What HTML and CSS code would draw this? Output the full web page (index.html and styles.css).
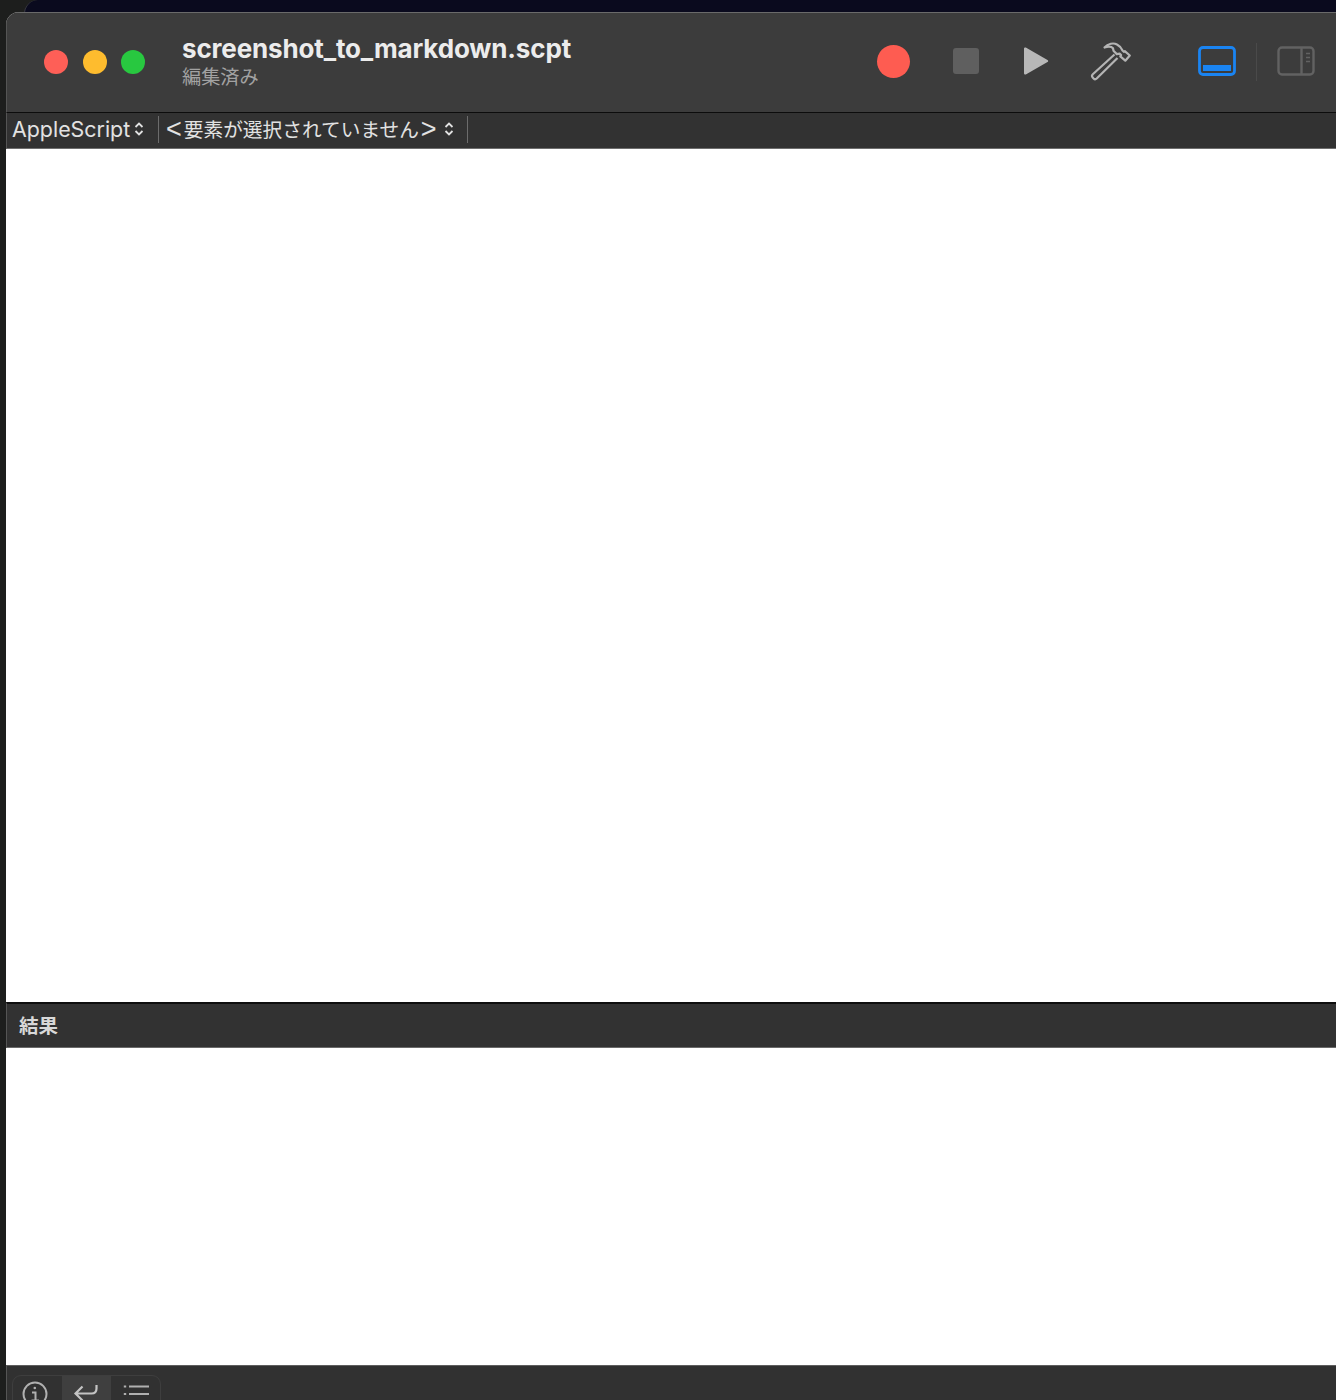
FILE: index.html
```html
<!DOCTYPE html>
<html lang="ja">
<head>
<meta charset="utf-8">
<title>screenshot_to_markdown.scpt</title>
<link rel="stylesheet" href="styles.css">
</head>
<body>
<div class="back-window"></div>
<main class="window">
  <header class="titlebar">
    <div class="traffic">
      <span class="light red"></span>
      <span class="light yellow"></span>
      <span class="light green"></span>
    </div>
    <div class="titles">
      <div class="doc-name">screenshot_to_markdown.scpt</div>
      <div class="doc-state">編集済み</div>
    </div>
    <div class="tools">
      <span class="record"></span>
      <span class="stop"></span>
      <svg class="play" width="26" height="30" viewBox="0 0 26 30"><path d="M1 2.700v24.600c0 1 1 1.500 1.800 1.100L24.500 16c.9-.5.900-1.600 0-2.100L2.800 1.600C2 1.200 1 1.700 1 2.700z" fill="#b8b8b8"/></svg>
      <svg class="hammer" width="42" height="40" viewBox="0 0 42 40" fill="none" stroke="#b4b4b4" stroke-width="2.200" stroke-linejoin="round"><path d="M24.500 13.500 2.800 33.300a2.200 2.200 0 0 0-.1 3.100l.9 1a2.200 2.200 0 0 0 3.100.1L27.500 17"/><path d="M14.500 6.500C18 2.500 23.500 1.500 27 3.500c2.500 1.300 4.500 3.500 5.500 6l1.300 1.300 1-.7 5 4.400-4.500 5.200-5-4.400.8-1.200-1.500-1.500-2.800.5-3.300-3.300-.5-2.500C21.500 5.500 18 5.300 14.500 6.500z"/></svg>
      <svg class="panel-bottom" width="38" height="30" viewBox="0 0 38 30"><rect x="1.500" y="1.500" width="35" height="27" rx="3.500" fill="none" stroke="#1a84f2" stroke-width="2.800"/><rect x="5" y="19" width="28" height="6" fill="#1a84f2"/></svg>
      <span class="tool-sep"></span>
      <svg class="panel-side" width="38" height="30" viewBox="0 0 38 30" fill="none" stroke="#626262" stroke-width="2.400"><rect x="1.500" y="1.500" width="35" height="27" rx="3.500"/><path d="M24.500 2v26"/><path d="M29 7.500h4M29 11.500h4M29 15.500h4" stroke-width="1.600"/></svg>
    </div>
  </header>
  <nav class="navbar">
    <span class="nav-item lang">AppleScript<svg class="updown" width="10" height="16" viewBox="0 0 10 16" fill="none" stroke="#e0e0e0" stroke-width="1.800"><path d="M1.500 6 5 2.500 8.500 6M1.500 10 5 13.500 8.500 10"/></svg></span>
    <span class="nav-item element"><span class="bracket">&lt;</span><span class="element-text">要素が選択されていません</span><span class="bracket">&gt;</span><svg class="updown" width="10" height="16" viewBox="0 0 10 16" fill="none" stroke="#e0e0e0" stroke-width="1.800"><path d="M1.500 6 5 2.500 8.500 6M1.500 10 5 13.500 8.500 10"/></svg></span>
  </nav>
  <section class="editor"></section>
  <div class="result-head">結果</div>
  <section class="result"></section>
  <footer class="bottombar">
    <div class="segments">
      <span class="segment">
        <svg class="icon-info" width="28" height="28" viewBox="0 0 28 28" fill="none" stroke="#b0b0b0" stroke-width="2"><circle cx="14" cy="14" r="11.500"/><path d="M11 12.500h3.500V20M10.500 20.500h7.500"/><circle cx="13.800" cy="8" r="1.300" fill="#b0b0b0" stroke="none"/></svg>
      </span>
      <span class="segment active">
        <svg class="icon-return" width="28" height="28" viewBox="0 0 28 28" fill="none" stroke="#c4c4c4" stroke-width="2.200"><path d="M24.500 5v3.500c0 3-1.800 5-5 5H3.500M10.500 6.500l-7 7 7 7"/></svg>
      </span>
      <span class="segment">
        <svg class="icon-list" width="28" height="28" viewBox="0 0 28 28" fill="none" stroke="#b0b0b0" stroke-width="2.200"><path d="M6 6.500h20M6 14h20M6 21.500h20"/><path d="M0.800 6.500h2.400M0.800 14h2.400M0.800 21.500h2.400"/></svg>
      </span>
    </div>
  </footer>
</main>
</body>
</html>
```
FILE: styles.css
```css
html, body {
  margin: 0;
  padding: 0;
}
body {
  position: relative;
  height: 1400px;
  overflow: hidden;
  background: #1d1e1d;
  font-family: "Liberation Sans", "Noto Sans CJK JP", sans-serif;
  padding: 12px 0 0 6px;
  box-sizing: border-box;
}
.back-window {
  position: absolute;
  left: 24px;
  right: 0;
  top: 0;
  height: 40px;
  box-sizing: border-box;
  background: #0a0a1e;
  border-radius: 14px 0 0 0;
  border-left: 1px solid #3a3a44;
}
.window {
  position: relative;
  height: 1388px;
  display: flex;
  flex-direction: column;
  border-top-left-radius: 13px;
  overflow: hidden;
  background: #fff;
}
.titlebar {
  flex: 0 0 101px;
  box-sizing: border-box;
  display: flex;
  align-items: center;
  background: #3c3c3c;
  border-top: 1px solid #6a6a6a;
  border-left: 1px solid #555;
  border-bottom: 1px solid #0c0c0c;
  padding-bottom: 2px;
}
.traffic {
  display: flex;
  gap: 14.500px;
  margin-left: 37px;
}
.light {
  width: 24px;
  height: 24px;
  border-radius: 50%;
}
.red { background: #fe5f57; }
.yellow { background: #febc2e; }
.green { background: #28c840; }
.titles {
  margin-left: 37px;
  width: 560px;
  margin-top: 3px;
}
.doc-name {
  font-family: Inter, "Liberation Sans", sans-serif;
  font-size: 26px;
  font-weight: 700;
  line-height: 30px;
  letter-spacing: -0.15px;
  color: #ececec;
  white-space: nowrap;
}
.doc-state {
  font-size: 19.200px;
  line-height: 28px;
  color: #a2a2a2;
}
.tools {
  display: flex;
  align-items: center;
  margin-left: 135px;
}
.record {
  width: 33px;
  height: 33px;
  border-radius: 50%;
  background: #fe5c51;
}
.stop {
  width: 26px;
  height: 26px;
  margin-left: 43px;
  margin-bottom: 2px;
  border-radius: 3px;
  background: #5f5f5f;
}
.play {
  margin-left: 44px;
  margin-bottom: 1px;
}
.hammer {
  margin-left: 41px;
  margin-bottom: 2px;
}
.panel-bottom {
  margin-left: 66px;
  margin-bottom: 2px;
}
.panel-side { margin-bottom: 2px; }
.tool-sep {
  width: 1px;
  height: 38px;
  margin: 0 20px;
  background: #4a4a4a;
}
.navbar {
  flex: 0 0 36px;
  box-sizing: border-box;
  display: flex;
  align-items: center;
  padding-bottom: 3px;
  background: #323232;
  border-left: 1px solid #555;
  border-bottom: 1px solid #6e6e6e;
  color: #e2e2e2;
  font-family: Inter, "Noto Sans CJK JP", sans-serif;
  font-size: 21.400px;
}
.nav-item {
  display: flex;
  align-items: center;
  height: 27px;
  border-right: 1px solid #6c6c6c;
  white-space: nowrap;
  line-height: 26px;
}
.lang {
  width: 152px;
  padding-left: 5px;
  box-sizing: border-box;
}
.lang .updown { margin-left: 4px; }
.element {
  width: 309px;
  padding-left: 7px;
  box-sizing: border-box;
}
.bracket {
  font-family: "Liberation Sans", sans-serif;
  font-size: 27px;
  line-height: 26px;
}
.element-text {
  font-family: "Noto Sans CJK JP", sans-serif;
  font-size: 19.700px;
  margin: 0 2px;
}
.element .updown { margin-left: 7px; }
.editor {
  flex: 0 0 853px;
  background: #fff;
}
.result-head {
  flex: 0 0 46px;
  box-sizing: border-box;
  display: flex;
  align-items: center;
  padding: 0 0 2px 12px;
  background: #323232;
  border-top: 2px solid #0e0e0e;
  border-left: 1px solid #555;
  border-bottom: 1px solid #6a6a6a;
  font-size: 19.500px;
  font-weight: 700;
  color: #d8d8d8;
}
.result {
  flex: 0 0 317px;
  background: #fff;
}
.bottombar {
  flex: 1;
  box-sizing: border-box;
  background: #313131;
  border-top: 1px solid #5e5e5e;
  border-left: 1px solid #555;
  padding: 9px 0 0 5px;
}
.segments {
  display: flex;
  width: 149px;
  height: 60px;
  box-sizing: border-box;
  border: 1px solid #3e3e3e;
  border-radius: 9px;
  overflow: hidden;
}
.segment {
  flex: 1;
  display: flex;
  justify-content: center;
  padding-top: 4px;
}
.icon-info { margin-right: 5px; }
.icon-return { margin-right: 2px; }
.icon-list { margin-left: 3px; }
.active { background: #3f3f3f; }
```
